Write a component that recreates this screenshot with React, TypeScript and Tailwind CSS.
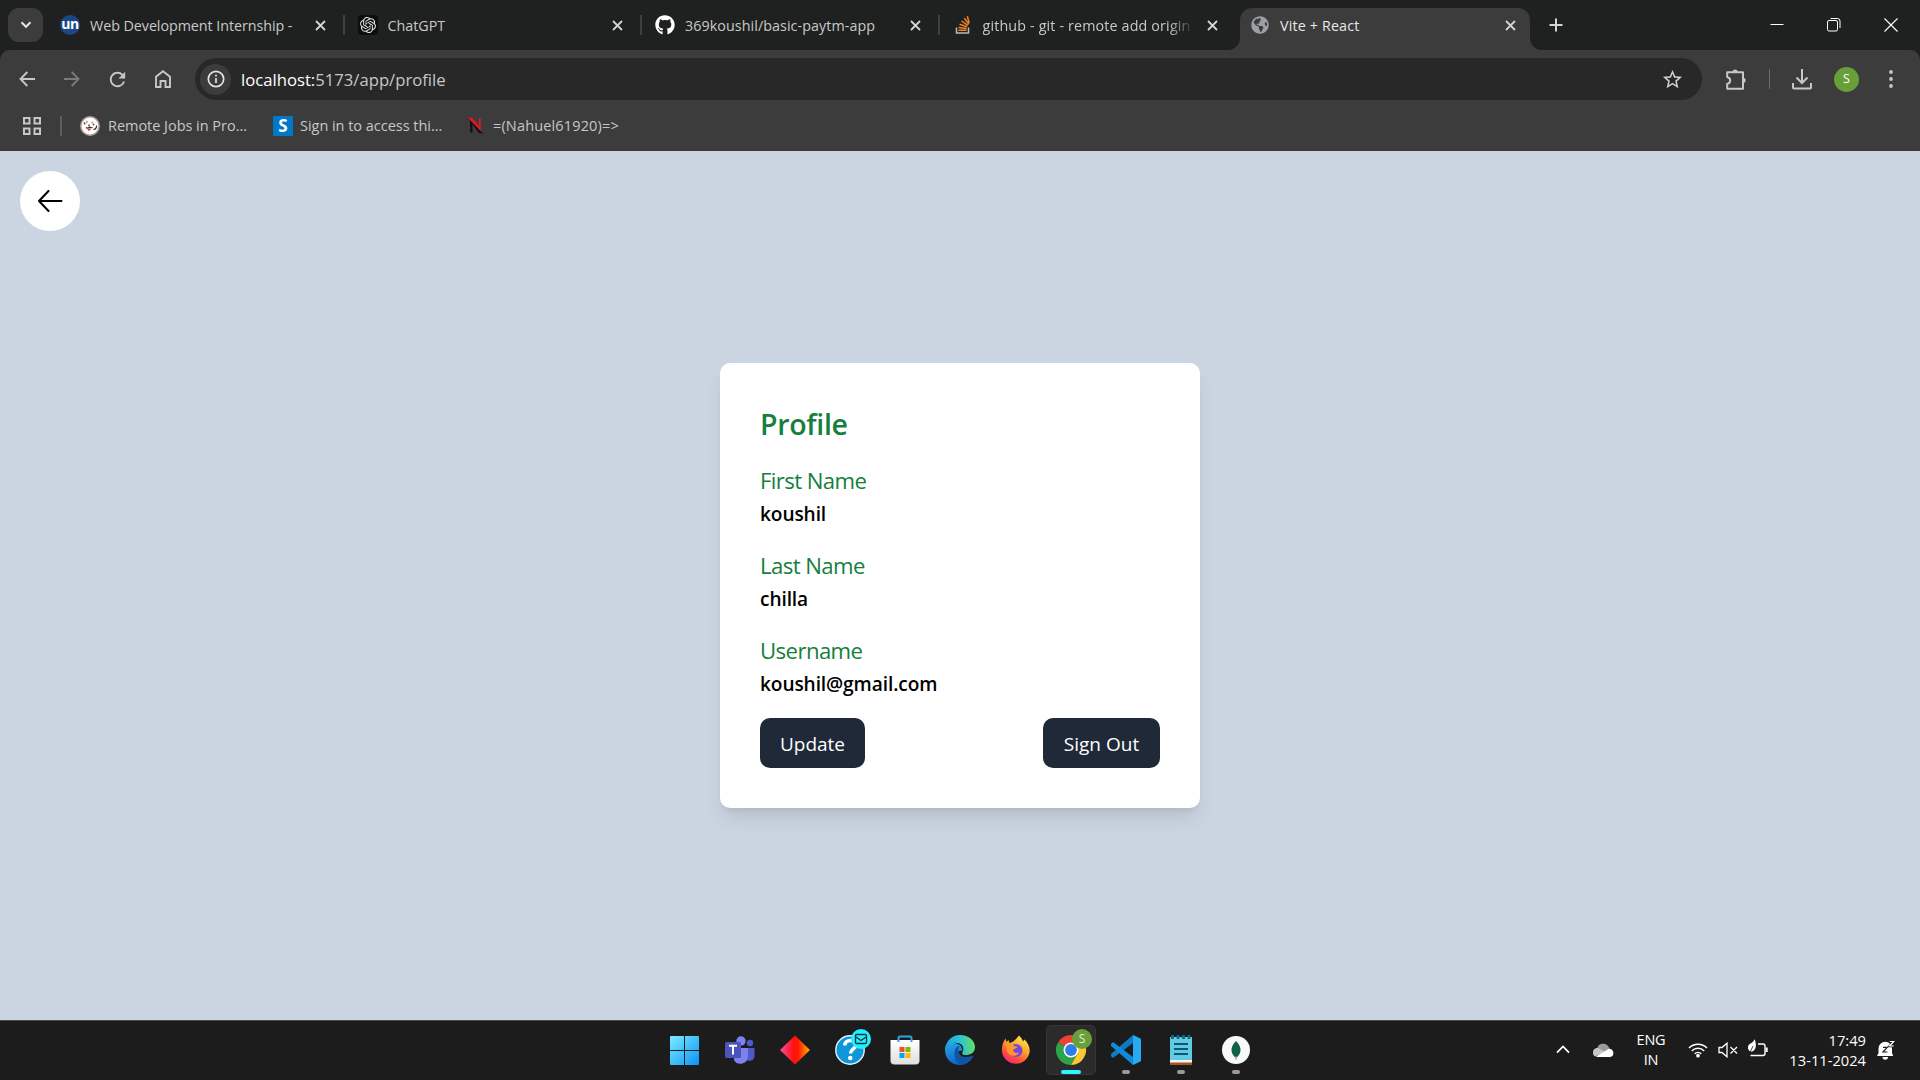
import React from "react";
import { SiOpenai } from "react-icons/si";
import { FaGithub, FaGlobeAmericas } from "react-icons/fa";
import { MdOutlineStarBorder, MdRefresh } from "react-icons/md";

type P = { children?: React.ReactNode; className?: string };

const UI = "font-['Open_Sans','Noto_Sans',sans-serif]";

function CloseX({ className = "text-[#d3d5d4]" }: { className?: string }) {
  return (
    <svg className={`h-[11px] w-[11px] shrink-0 ${className}`} viewBox="0 0 11 11" fill="none" stroke="currentColor" strokeWidth="1.8">
      <path d="M1 1l9 9M10 1L1 10" />
    </svg>
  );
}

function Tab({ icon, title, active, divider, fade }: { icon: React.ReactNode; title: React.ReactNode; active?: boolean; divider?: boolean; fade?: boolean }) {
  return (
    <div className="flex h-[50px] shrink-0 items-center">
      <div className={`flex h-[42px] w-[290px] items-center pr-[14.5px] pl-[10px] ${active ? "mt-2 rounded-t-xl bg-[#3c3c3c] pb-[8px] text-[#e8e8e8]" : "text-[#c7c9c8]"}`}>
        <div className="mr-[10px] flex h-5 w-5 shrink-0 items-center justify-center">{icon}</div>
        <div
          className={`min-w-0 flex-1 overflow-hidden pt-px text-[14.3px] leading-5 whitespace-nowrap ${fade ? "[mask-image:linear-gradient(to_right,black_185px,transparent_212px)]" : ""}`}
        >
          {title}
        </div>
        <div className="ml-[16px] flex">
          <CloseX />
        </div>
      </div>
      <div className={`mx-[2.75px] h-5 w-[2px] ${divider ? "bg-[#3f4140]" : ""}`} />
    </div>
  );
}

function StackOverflow() {
  return (
    <svg viewBox="0 0 20 20" className="h-5 w-5" fill="none">
      <path d="M3.5 12.500V18H15.500V12.500" stroke="#b9babb" strokeWidth="1.5" />
      <path d="M5.500 15.300h8M5.600 12.500l8 .9M6.500 9.300l7.500 2.400M8.500 6l6.400 4.300M11.300 3.300l4.600 6M14.300 1.300l1.900 6.700" stroke="#f48024" strokeWidth="1.500" />
    </svg>
  );
}

function TabStrip() {
  return (
    <div className="flex h-[50px] bg-[#1f2120]">
      <div className="mt-2 ml-2 flex h-[34px] w-[35px] items-center justify-center rounded-[11px] bg-[#3c3c3c]">
        <svg viewBox="0 0 12 8" className="h-[8px] w-[12px]" fill="none" stroke="#e3e3e3" strokeWidth="2">
          <path d="M1.500 1.300L6 5.800l4.500-4.500" />
        </svg>
      </div>
      <div className="ml-[7px] flex">
        <Tab
          divider
          icon={<div className="flex h-5 w-5 items-center justify-center rounded-full bg-[#1c4885] text-[14px] leading-none font-bold tracking-[-0.5px] text-white"><span className="-mt-[3px]">un</span></div>}
          title={<span className="tracking-[-0.05px]">Web Development Internship -</span>}
        />
        <Tab
          divider
          icon={<div className="flex h-5 w-5 items-center justify-center rounded-[4px] bg-[#0c0d0d]"><SiOpenai className="h-4 w-4 text-[#e0e0e0]" /></div>}
          title="ChatGPT"
        />
        <Tab divider icon={<FaGithub className="h-5 w-5 text-white" />} title={<span className="tracking-[0.07px]">369koushil/basic-paytm-app</span>} />
        <Tab icon={<StackOverflow />} title={<span className="tracking-[0.15px]">github - git - remote add origin</span>} fade />
        <div className="relative">
          <Tab active icon={<FaGlobeAmericas className="h-[18px] w-[18px] text-[#9aa0a6]" />} title={<span className="tracking-[0.15px]">Vite + React</span>} />
          <svg className="absolute bottom-0 -left-3 h-3 w-3" viewBox="0 0 12 12" fill="#3c3c3c"><path d="M12 0v12H0A12 12 0 0 0 12 0z" /></svg>
          <svg className="absolute right-[-4px] bottom-0 h-3 w-3" viewBox="0 0 12 12" fill="#3c3c3c"><path d="M0 0v12h12A12 12 0 0 1 0 0z" /></svg>
        </div>
      </div>
      <svg className="mt-[18px] ml-[11px] h-[14px] w-[14px]" viewBox="0 0 14 14" stroke="#d3d5d4" strokeWidth="2"><path d="M7 0.500v13M.5 7h13" /></svg>
      <div className="mt-[18px] mr-[22px] ml-auto flex items-start gap-[43px]">
        <svg className="h-[14px] w-[14px]" viewBox="0 0 14 14" stroke="#fff" strokeWidth="1"><path d="M.5 6.500h13" /></svg>
        <svg className="h-[14px] w-[14px]" viewBox="0 0 14 14" fill="none" stroke="#fff" strokeWidth="1">
          <rect x=".5" y="2.500" width="10" height="10.500" rx="1.500" />
          <path d="M3.500.5h7a2.500 2.500 0 0 1 2.500 2.500v7" />
        </svg>
        <svg className="h-[14px] w-[14px]" viewBox="0 0 14 14" stroke="#fff" strokeWidth="1.1"><path d="M.5.5l13 13M13.500.5l-13 13" /></svg>
      </div>
    </div>
  );
}

function Arrow({ className, flip }: { className: string; flip?: boolean }) {
  return (
    <svg viewBox="0 0 16 16" className={`h-4 w-4 ${className} ${flip ? "rotate-180" : ""}`} fill="none" stroke="currentColor" strokeWidth="1.900">
      <path d="M8.300 1L1.500 8l6.800 7M1.500 8H16" />
    </svg>
  );
}

function Toolbar() {
  return (
    <div className="flex h-[58px] items-center rounded-t-[10px] bg-[#3c3c3c] text-[#c7c7c7]">
      <Arrow className="ml-[19px]" />
      <Arrow className="ml-[29px] text-[#7b7b7b]" flip />
      <MdRefresh className="ml-[26px] h-[23px] w-[23px]" />
      <svg className="ml-[26px] h-[18px] w-4" viewBox="0 0 16 18" fill="none" stroke="currentColor" strokeWidth="1.900">
        <path d="M1 6.800L8 1.200l7 5.600V17h-4.500v-6h-5v6H1z" />
      </svg>
      <div className="ml-[24px] flex h-[42px] w-[1507px] items-center rounded-full bg-[#282828] pr-[18px] pl-[5px]">
        <div className="flex h-[31px] w-[31px] items-center justify-center rounded-full bg-[#3c3c3c]">
          <svg viewBox="0 0 18 18" className="h-[18px] w-[18px]" fill="none" stroke="#e3e3e3" strokeWidth="1.700">
            <circle cx="9" cy="9" r="7.700" />
            <path d="M9 8v5M9 4.800v1.800" />
          </svg>
        </div>
        <div className="ml-[10px] pt-px text-[16.700px] leading-6 tracking-[-0.01px] whitespace-nowrap text-[#c7c7c7]">
          <span className="text-white">localhost:</span>5173/app/profile
        </div>
        <MdOutlineStarBorder className="ml-auto h-[23px] w-[23px] text-[#d0d0d0]" />
      </div>
      <svg className="ml-[24px] h-[21px] w-[21px]" viewBox="0 0 21 21" fill="none" stroke="currentColor" strokeWidth="2" strokeLinejoin="round">
        <path d="M1.200 3.200H17v16.600H1.200V15c2-.5 3-1.800 3-3.500s-1-3-3-3.500z" />
        <path d="M6.500 3.200a2.600 2.600 0 0 1 5.200 0zM17 8.700a2.600 2.600 0 0 1 0 5.200z" fill="currentColor" stroke="none" />
      </svg>
      <div className="ml-[22px] h-5 w-px bg-[#6a6a6a]" />
      <svg className="ml-[22px] h-[21px] w-5" viewBox="0 0 20 21" fill="none" stroke="currentColor" strokeWidth="2">
        <path d="M10 0v14M4.500 8.500L10 14l5.500-5.500M1 14v4.500a1 1 0 0 0 1 1h16a1 1 0 0 0 1-1V14" />
      </svg>
      <div className="ml-[22px] flex h-[25px] w-[25px] items-center justify-center rounded-full bg-[#689f38] text-[12.500px] leading-none text-white">S</div>
      <svg className="ml-[30px] h-[18px] w-1" viewBox="0 0 4 18" fill="currentColor">
        <circle cx="2" cy="2" r="1.900" /><circle cx="2" cy="9" r="1.900" /><circle cx="2" cy="16" r="1.900" />
      </svg>
    </div>
  );
}

function Bookmarks() {
  return (
    <div className="flex h-[43px] items-start bg-[#3c3c3c] pt-2 text-[14.500px] leading-5 whitespace-nowrap text-[#c7c7c7]">
      <svg className="mt-px ml-[23px] h-[18px] w-[18px]" viewBox="0 0 18 18" fill="none" stroke="currentColor" strokeWidth="2">
        <path d="M1 1h5.500v5.500H1zM11.500 1H17v5.500h-5.500zM1 11.500h5.500V17H1zM11.500 11.500H17V17h-5.500z" />
      </svg>
      <div className="ml-[19px] h-5 w-[2px] bg-[#5e5e5e]" />
      <svg className="ml-[18px] h-5 w-5" viewBox="0 0 20 20">
        <circle cx="10" cy="10" r="9.200" fill="#fff" stroke="#a99b98" strokeWidth="1.600" />
        <path d="M6 7l1.500-2M11.500 6l1.500 1" stroke="#e0935f" strokeWidth="1.600" fill="none" />
        <path d="M4 6.500l1 2M12.800 8.500h1.500M9 8.500v2M6 11.500c1 .8 2 .8 3 0s2 .8 3.500 0" stroke="#43302e" strokeWidth="1.300" fill="none" />
        <path d="M7.500 12.500h3.200c0 3-3.200 3-3.200 0z" fill="#b8433c" />
        <path d="M16.500 9.500c.3 2-.7 3.500-3 4.300" stroke="#43302e" strokeWidth="1.200" fill="none" />
      </svg>
      <span className="ml-[8px] w-[139px] tracking-[-0.03px]">Remote Jobs in Pro...</span>
      <div className="ml-[26px] flex h-5 w-5 items-center justify-center bg-[#0078c8] text-[17px] font-bold text-white">S</div>
      <span className="ml-[7px] w-[142px] tracking-[-0.03px]">Sign in to access thi...</span>
      <svg className="ml-[25px] h-[18px] w-[18px]" viewBox="0 0 18 18">
        <path d="M3 3v13.500h2.500V8z" fill="#151515" />
        <path d="M0 1l5 1.500L12.500 14.500 17 17.500l-5-.5z" fill="#111" />
        <path d="M0 1l5.500 1 6.500 8.500V2.300h1.700V15z" fill="#e01a22" />
      </svg>
      <span className="ml-[8px] tracking-[0.15px]">=(Nahuel61920)=&gt;</span>
    </div>
  );
}

function Field({ label, value }: { label: string; value: string }) {
  return (
    <div className="mb-[20px]">
      <div className="h-[35px] pt-px text-[22.200px] leading-[34px] tracking-[-0.600px] text-[#15803d]">{label}</div>
      <div className="h-[30px] pt-px text-[19.100px] leading-[30px] font-semibold tracking-[-0.100px] text-black">{value}</div>
    </div>
  );
}

function Button({ children, className = "" }: P) {
  return (
    <button className={`flex h-[50px] items-center justify-center rounded-[10px] bg-[#1f2937] pt-[3px] text-[19px] font-medium text-white ${className}`}>{children}</button>
  );
}

function Page() {
  return (
    <main className="flex h-[869px] flex-col items-center bg-[#cbd5e1]">
      <div className="flex w-full">
        <button className="mt-5 ml-5 flex h-[60px] w-[60px] items-center justify-center rounded-full bg-white">
          <svg viewBox="0 0 26 22" className="h-[22px] w-[26px]" fill="none" stroke="#000" strokeWidth="2" strokeLinecap="round" strokeLinejoin="round">
            <path d="M11.500 1L2 11l9.500 10M2 11h22.500" />
          </svg>
        </button>
      </div>
      <section className="mt-[132px] h-[445px] w-[480px] rounded-[10px] bg-white px-10 pt-10 shadow-[0_12.5px_18.75px_-3.75px_rgb(0_0_0/0.1),0_5px_7.5px_-5px_rgb(0_0_0/0.1)]">
        <h1 className="mb-[15px] h-[45px] text-[28.500px] leading-[43px] font-semibold tracking-[-0.3px] text-[#15803d]">Profile</h1>
        <Field label="First Name" value="koushil" />
        <Field label="Last Name" value="chilla" />
        <Field label="Username" value="koushil@gmail.com" />
        <div className="flex justify-between">
          <Button className="w-[105px]">Update</Button>
          <Button className="w-[117px]">Sign Out</Button>
        </div>
      </section>
    </main>
  );
}

function Slot({ children, active, running }: P & { active?: boolean; running?: boolean }) {
  return (
    <div className={`relative flex h-[50px] w-[50px] items-center justify-center rounded-[5px] ${active ? "border border-[#363636] bg-[#2b2b2b]" : ""}`}>
      {children}
      {active && <div className="absolute bottom-0 h-1 w-5 rounded-full bg-[#2ff3ff]" />}
      {running && <div className="absolute bottom-px h-1 w-2 rounded-full bg-[#9a9a9a]" />}
    </div>
  );
}

function TaskIcons() {
  return (
    <div className="flex h-[50px] gap-[5.100px]">
      <Slot>
        <svg viewBox="0 0 29 29" className="mr-[2px] h-[29px] w-[29px]">
          <defs><linearGradient id="win" x1="0" y1="0" x2="29" y2="29" gradientUnits="userSpaceOnUse"><stop stopColor="#7cecff" /><stop offset="1" stopColor="#0a93f5" /></linearGradient></defs>
          <path d="M1 0h13v14H0V1a1 1 0 0 1 1-1zM15 0h13a1 1 0 0 1 1 1v13H15zM0 15h14v14H1a1 1 0 0 1-1-1zM15 15h14v13a1 1 0 0 1-1 1H15z" fill="url(#win)" />
        </svg>
      </Slot>
      <Slot>
        <svg viewBox="0 0 30 28" className="h-[28px] w-[30px]">
          <circle cx="25" cy="7" r="3.200" fill="#5059c9" />
          <path d="M21 12h7.500a1 1 0 0 1 1 1v7a5 5 0 0 1-8.500 3.500z" fill="#4f58c8" />
          <circle cx="16" cy="5" r="4.700" fill="#7b83eb" />
          <path d="M9 12h14v8.500a7.500 7.500 0 0 1-14 3.500z" fill="#7b83eb" />
          <rect x="0" y="6" width="16" height="16" rx="1.500" fill="#4b53bc" />
          <path d="M4 9.800h8M8 9.800V18.500" stroke="#fff" strokeWidth="2" />
        </svg>
      </Slot>
      <Slot>
        <svg viewBox="0 0 30 30" className="h-[30px] w-[30px]">
          <defs><linearGradient id="dia"><stop stopColor="#ff4fa3" /><stop offset=".45" stopColor="#ff1010" /><stop offset=".6" stopColor="#ff1a00" /><stop offset="1" stopColor="#ffb000" /></linearGradient></defs>
          <path d="M15 .5L30 15 15 29.500 0 15z" fill="url(#dia)" />
        </svg>
      </Slot>
      <Slot>
        <svg viewBox="0 0 36 36" className="h-9 w-9 -translate-y-[3px] translate-x-[3px]">
          <circle cx="15" cy="21" r="14.200" fill="#0d96d8" stroke="#e8f4fa" strokeWidth="1.400" />
          <path d="M9.800 16.500c0-7 11-6.500 11-.5 0 4-5.300 4-5.300 8.500" fill="none" stroke="#fff" strokeWidth="3.500" />
          <circle cx="15.300" cy="29" r="2.300" fill="#fff" />
          <circle cx="26" cy="10" r="10" fill="#22f0ff" />
          <rect x="20.500" y="5.500" width="11" height="9" rx="1" fill="none" stroke="#16343a" strokeWidth="1.300" />
          <path d="M21 8l5 3.500L31 8" fill="none" stroke="#16343a" strokeWidth="1.300" />
        </svg>
      </Slot>
      <Slot>
        <svg viewBox="0 0 30 30" className="h-[30px] w-[30px]">
          <defs><linearGradient id="bag" x2="0" y2="1"><stop stopColor="#fff" /><stop offset="1" stopColor="#dedede" /></linearGradient></defs>
          <path d="M.5 5h29v20.500a4 4 0 0 1-4 4h-21a4 4 0 0 1-4-4z" fill="url(#bag)" />
          <path d="M8.500 7V3a1.500 1.500 0 0 1 1.500-1.500h10A1.500 1.500 0 0 1 21.500 3v4" fill="none" stroke="#2ba5e0" strokeWidth="2" />
          <path d="M9.500 12h5v5h-5z" fill="#f25022" /><path d="M15.500 12h5v5h-5z" fill="#7fba00" />
          <path d="M9.500 18h5v5h-5z" fill="#00a4ef" /><path d="M15.500 18h5v5h-5z" fill="#ffb900" />
        </svg>
      </Slot>
      <Slot>
        <svg viewBox="0 0 30 30" className="h-[30px] w-[30px]">
          <defs>
            <linearGradient id="eg" x1="0" y1=".4" x2="1" y2=".3"><stop stopColor="#1c9fe0" /><stop offset=".5" stopColor="#2cc3d5" /><stop offset="1" stopColor="#66e05c" /></linearGradient>
            <linearGradient id="eb" x2=".4" y2="1"><stop stopColor="#29a8e8" /><stop offset="1" stopColor="#0a62c4" /></linearGradient>
          </defs>
          <path d="M0 15C0 8 6 7 10 8c4 1 8 3 7 8-5-2-7 6-1 9 4 2 9 1 12-3-3 5-8 8-13 8C7 30 0 24 0 15z" fill="url(#eb)" />
          <path d="M9.500 18c0-5 3-7 5-7-3 5 0 11 6 11 4 0 7-2 8-1-3 6-9 9-14 8-3-1-5-6-5-11z" fill="#1254a1" />
          <path d="M0 14C1 6 7 0 15 0c9 0 15 6 15 12s-5 8-9 8c-5 0-4-2-3-4C21 6 4 5 0 14z" fill="url(#eg)" />
        </svg>
      </Slot>
      <Slot>
        <svg viewBox="0 0 30 30" className="h-[30px] w-[30px]">
          <defs>
            <linearGradient id="ff" x1=".8" x2=".2" y2="1"><stop stopColor="#fff04a" /><stop offset=".4" stopColor="#ffa62b" /><stop offset=".75" stopColor="#ff4a3d" /><stop offset="1" stopColor="#e8208c" /></linearGradient>
          </defs>
          <path d="M18 .5c2 2 3.500 4 4 6l1.500-2c3 3 5.500 7 5.200 12A14 14 0 0 1 1 17C.6 11 2 7 4.500 3.500L5.500 7l2-2 1 3c4-1 6-3 9.500-7.500z" fill="url(#ff)" />
          <circle cx="15" cy="15.500" r="6.500" fill="#7a45dd" />
          <path d="M4.500 9c4-2 7 0 8.500 2l3.500.8c-1 2-4 1.800-4.500 3.700 1 2.500 4 3 6 2-2 4.500-9 4.500-11.500-.5-1-2-.8-3-.5-4z" fill="#ff9a2a" />
        </svg>
      </Slot>
      <Slot active>
        <svg viewBox="0 0 36 36" className="h-9 w-9 -translate-y-[3px] translate-x-[3px]">
          <path d="M15 21L2 13.500A15 15 0 0 1 28 13.500H15z" fill="#ea4335" />
          <path d="M15 21L2 13.500A15 15 0 0 0 15 36l6.500-11.300z" fill="#2da44a" />
          <path d="M28 13.500A15 15 0 0 1 15 36l6.500-11.300V13.500z" fill="#fcc934" />
          <circle cx="15" cy="21" r="7.500" fill="#fff" /><circle cx="15" cy="21" r="5.900" fill="#2f7de9" />
          <circle cx="26" cy="10" r="10" fill="#689f38" />
          <text x="26" y="14.200" textAnchor="middle" fontSize="12" fill="#e4edda">S</text>
        </svg>
      </Slot>
      <Slot running>
        <svg viewBox="0 0 30 30" className="h-[30px] w-[30px]">
          <path d="M22 0v8L3 22.200a1.500 1.500 0 0 1-2 0l-1-1.300a1.500 1.500 0 0 1 0-2z" fill="#0e7cc4" />
          <path d="M22 30v-8L3 7.800a1.500 1.500 0 0 0-2 0L0 9.100a1.500 1.500 0 0 0 0 2z" fill="#1089d8" />
          <path d="M22 0l7 3.300a1.600 1.600 0 0 1 1 1.500v20.400a1.600 1.600 0 0 1-1 1.500L22 30z" fill="#29a9f2" />
        </svg>
      </Slot>
      <Slot running>
        <svg viewBox="0 0 22 30" className="h-[30px] w-[22px]">
          <path d="M0 26h22v4H0z" fill="#a8541c" /><path d="M0 24h22v3.500H0z" fill="#f4f4f4" />
          <path d="M0 2h22v23H0z" fill="#62cbe3" />
          <path d="M2.500 0v4M8 0v4M13.500 0v4M19 0v4" stroke="#0d6a88" strokeWidth="2.800" />
          <path d="M4 9h14M4 14h14M4 19h14" stroke="#0d5570" strokeWidth="1.800" />
        </svg>
      </Slot>
      <Slot running>
        <svg viewBox="0 0 28 28" className="h-7 w-7">
          <circle cx="14" cy="14" r="14" fill="#f8f8f8" />
          <path d="M14 5c7 7 5 13 0 17-5-4-7-10 0-17z" fill="#116149" /><path d="M14 20v4" stroke="#9aaea3" strokeWidth="1" />
        </svg>
      </Slot>
    </div>
  );
}

function Taskbar() {
  return (
    <footer className="grid h-[60px] grid-cols-[660px_601px_1fr] border-t border-[#4a4a4a] bg-[#1c1c1c] text-white">
      <div />
      <div className="pt-1"><TaskIcons /></div>
      <div className="flex items-center pb-[2px]">
        <svg className="ml-[295px] h-[9px] w-[14px]" viewBox="0 0 14 9" fill="none" stroke="#fff" strokeWidth="1.700"><path d="M1 7.700L7 1.500l6 6.200" /></svg>
        <svg className="ml-[23px] h-[14px] w-[21px]" viewBox="0 0 21 14">
          <path d="M4 6a6.300 6.300 0 0 1 12-1.500L20 9 4 12a4 4 0 0 1 0-6z" fill="#9b9b9b" />
          <path d="M0 9.500A4.300 4.300 0 0 1 5 5l7 4-10 4.500A4 4 0 0 1 0 9.500z" fill="#c6c6c6" />
          <path d="M3 13.500L15.500 6A4 4 0 0 1 17 14H4z" fill="#fff" />
        </svg>
        <div className="ml-[22px] w-[30px] text-center text-[14.500px] leading-5 tracking-[-0.2px]">ENG<br />IN</div>
        <svg className="ml-[22px] h-[16px] w-[20px]" viewBox="0 0 21 16" fill="none" stroke="#fff" strokeWidth="1.500">
          <path d="M1 6a13 13 0 0 1 19 0M4 9a9 9 0 0 1 13 0M7 12a5 5 0 0 1 7 0" /><circle cx="10.500" cy="14" r="1.200" fill="#fff" />
        </svg>
        <svg className="ml-[10px] h-[16px] w-[20px]" viewBox="0 0 20 16" fill="none" stroke="#fff" strokeWidth="1.300">
          <path d="M1 5.500h3L9 1.200v13.600L4 10.500H1zM12.500 5l6.500 6.500M19 5l-6.500 6.500" />
        </svg>
        <svg className="mb-[3px] ml-[9px] h-[18px] w-[21px]" viewBox="0 0 21 18" fill="none" stroke="#fff" strokeWidth="1.400">
          <path d="M11 5h5a2 2 0 0 1 2 2v7.500a2 2 0 0 1-2 2H3.500" /><path d="M19.700 8.500v4.500" strokeWidth="2" />
          <path d="M7.500.3c2 4 2.500 11-3 12.500C0 12 0 6 3.500 4.500 5.500 3.500 6.500 2.500 7.500.3z" fill="#fff" stroke="none" />
          <path d="M2 15.500l4-8.500" stroke="#1c1c1c" strokeWidth=".8" />
        </svg>
        <div className="ml-auto text-right text-[14.700px] leading-5 whitespace-nowrap">17:49<br />13-11-2024</div>
        <svg className="mr-[25px] ml-[11px] h-5 w-[18px]" viewBox="0 0 18 20">
          <path d="M1.500 8.500a6.500 6.500 0 0 1 13.500 0V13l1.200 3H0l1.500-3zM5.500 17h5.500a2.700 2.700 0 0 1-5.500 0z" fill="#fff" />
          <path d="M12.500 2h4L12.500 6.200h4.500" fill="none" stroke="#1c1c1c" strokeWidth="2.200" />
          <path d="M12.700 1.500h4l-4 4.500h4" fill="none" stroke="#fff" strokeWidth="1.200" />
          <path d="M6 7.300h4.200L6 12h4.400" fill="none" stroke="#1c1c1c" strokeWidth="1.200" />
        </svg>
      </div>
    </footer>
  );
}

export default function App() {
  return (
    <div className={`flex h-[1080px] w-[1920px] flex-col overflow-hidden bg-[#1f2120] ${UI}`}>
      <TabStrip />
      <Toolbar />
      <Bookmarks />
      <Page />
      <Taskbar />
    </div>
  );
}
